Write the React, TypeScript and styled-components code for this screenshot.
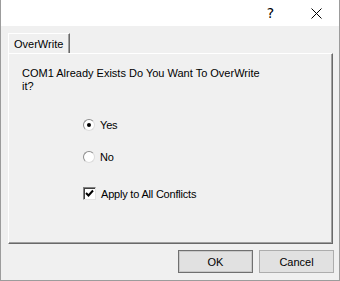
import styled, { createGlobalStyle } from "styled-components"

const GlobalStyle = createGlobalStyle`
  html, body {
    margin: 0;
    padding: 0;
    background: #ffffff;
  }
  body {
    font-family: "Liberation Sans", Arial, sans-serif;
    font-size: 11px;
    color: #000;
  }
`

const Window = styled.div`
  width: 340px;
  height: 281px;
  box-sizing: border-box;
  border: 1px solid #9c9c9c;
  border-top: none;
  background: #f0f0f0;
  display: flex;
  flex-direction: column;
`

const TitleBar = styled.div`
  height: 26px;
  background: #ffffff;
  display: flex;
  justify-content: flex-end;
  align-items: stretch;
`

const CaptionButton = styled.div<{ $wide?: boolean }>`
  width: ${({ $wide }) => ($wide ? 46 : 45)}px;
  display: flex;
  align-items: center;
  justify-content: center;
  font-family: "DejaVu Sans", sans-serif;
  font-size: 14px;
  color: #000;
`

const Body = styled.div`
  flex: 1;
  display: flex;
  flex-direction: column;
  padding: 7px 6px 0 7px;
`

const TabStrip = styled.div`
  display: flex;
  height: 20px;
`

const Tab = styled.div`
  width: 62px;
  box-sizing: border-box;
  border-top: 1px solid #ffffff;
  border-left: 1px solid #ffffff;
  border-right: 1px solid #696969;
  box-shadow: inset -1px 0 0 #a0a0a0;
  padding: 4px 0 0 5px;
  white-space: nowrap;
`

const Panel = styled.div`
  height: 191px;
  box-sizing: border-box;
  border-top: 1px solid #ffffff;
  border-left: 1px solid #ffffff;
  border-right: 1px solid #696969;
  border-bottom: 1px solid #696969;
  box-shadow: inset -1px -1px 0 #a0a0a0;
  padding: 13px 0 0 13px;
  display: flex;
  flex-direction: column;
`

const Message = styled.div`
  width: 245px;
  line-height: 13px;
`

const OptionRow = styled.label<{ $gap: number }>`
  display: flex;
  align-items: center;
  height: 13px;
  margin-top: ${({ $gap }) => $gap}px;
  margin-left: 61px;
  gap: 5px;
  letter-spacing: -0.2px;
`

const Radio = styled.span<{ $checked?: boolean }>`
  width: 12px;
  height: 12px;
  box-sizing: border-box;
  border-radius: 50%;
  border: 1px solid #8d8d8d;
  border-right-color: #dcdcdc;
  border-bottom-color: #dcdcdc;
  background: #ffffff;
  display: flex;
  align-items: center;
  justify-content: center;

  &::after {
    content: "";
    width: 4px;
    height: 4px;
    border-radius: 50%;
    background: ${({ $checked }) => ($checked ? "#000" : "transparent")};
  }
`

const Check = styled.span`
  width: 13px;
  height: 13px;
  box-sizing: border-box;
  border: 1px solid #808080;
  border-right-color: #e3e3e3;
  border-bottom-color: #e3e3e3;
  box-shadow: inset 1px 1px 0 #404040;
  background: #ffffff;
  display: flex;
  align-items: center;
  justify-content: center;
`

const ButtonRow = styled.div`
  display: flex;
  justify-content: flex-end;
  gap: 6px;
  margin-top: 6px;
  margin-right: -1px;
`

const Button = styled.button<{ $default?: boolean }>`
  width: 75px;
  height: 23px;
  box-sizing: border-box;
  padding: 0;
  font-family: "Liberation Sans", Arial, sans-serif;
  font-size: 11px;
  color: #000;
  background: #e1e1e1;
  border: 1px solid ${({ $default }) => ($default ? "#707070" : "#adadad")};
  box-shadow: ${({ $default }) => ($default ? "inset 0 0 0 1px #c8c8c8" : "none")};
`

export default function App() {
  return (
    <>
      <GlobalStyle />
      <Window>
        <TitleBar>
          <CaptionButton>?</CaptionButton>
          <CaptionButton $wide>
            <svg width="11" height="11" viewBox="0 0 11 11">
              <path d="M0.5 0.5 L10.5 10.5 M10.5 0.5 L0.5 10.5" stroke="#000" strokeWidth="1" />
            </svg>
          </CaptionButton>
        </TitleBar>
        <Body>
          <TabStrip>
            <Tab>OverWrite</Tab>
          </TabStrip>
          <Panel>
            <Message>COM1 Already Exists Do You Want To OverWrite it?</Message>
            <OptionRow $gap={25}>
              <Radio $checked />
              Yes
            </OptionRow>
            <OptionRow $gap={19}>
              <Radio />
              No
            </OptionRow>
            <OptionRow $gap={24}>
              <Check>
                <svg width="9" height="9" viewBox="0 0 9 9">
                  <path d="M1 4 L3.5 6.5 L8 1.5" stroke="#000" strokeWidth="2" fill="none" />
                </svg>
              </Check>
              Apply to All Conflicts
            </OptionRow>
          </Panel>
          <ButtonRow>
            <Button $default>OK</Button>
            <Button>Cancel</Button>
          </ButtonRow>
        </Body>
      </Window>
    </>
  )
}
